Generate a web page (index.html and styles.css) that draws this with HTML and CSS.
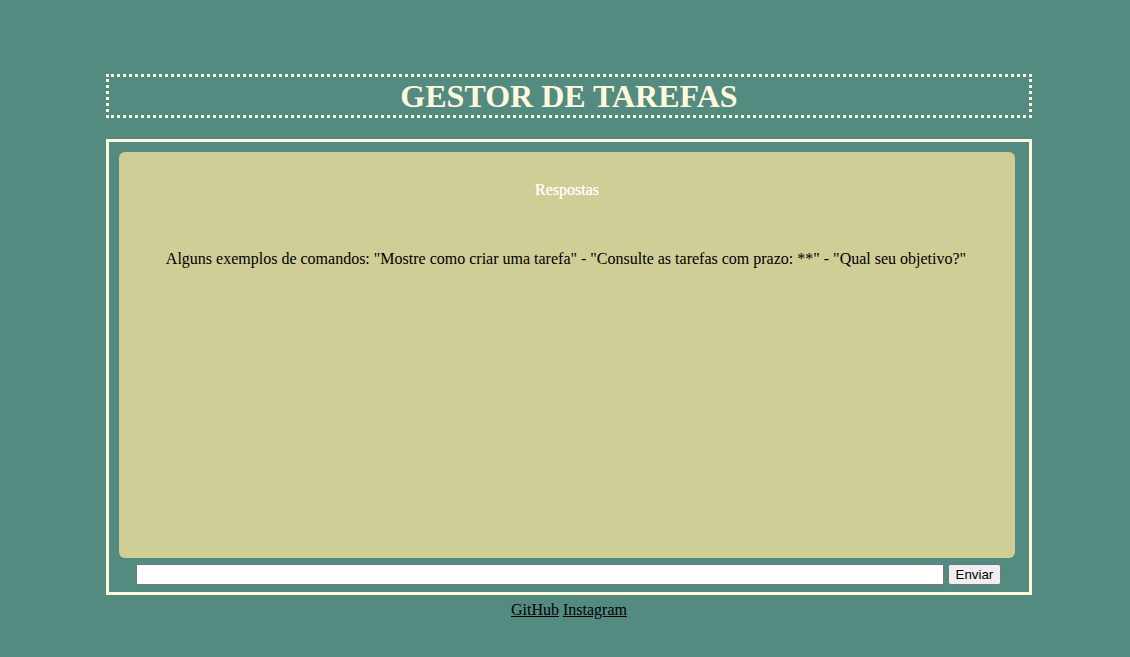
FILE: index.html
```html
<!DOCTYPE html>
<html lang="pt">
<head>
<meta charset="utf-8">
<title>Gestor de Tarefas</title>
<link rel="stylesheet" href="styles.css">
</head>
<body>
<div class="page">
  <header class="title-box">
    <h1 class="title">GESTOR DE TAREFAS</h1>
  </header>
  <main class="chat-box">
    <section class="answers">
      <h2 class="answers-title">Respostas</h2>
      <p class="examples">Alguns exemplos de comandos: "Mostre como criar uma tarefa" - "Consulte as tarefas com prazo: **" - "Qual seu objetivo?"</p>
    </section>
    <form class="ask-form">
      <input class="ask-input" type="text">
      <button class="ask-button" type="button">Enviar</button>
    </form>
  </main>
  <footer class="links">
    <a href="#">GitHub</a> <a href="#">Instagram</a>
  </footer>
</div>
</body>
</html>
```
FILE: styles.css
```css
html, body {
  margin: 0;
  padding: 0;
  background: #548b81;
}
body {
  font-family: "Liberation Serif", "Times New Roman", serif;
  font-size: 16px;
  color: #000;
}
.page {
  width: 926px;
  margin-left: 106px;
  padding-top: 74px;
}
.title-box {
  border: 3px dotted #fff8dc;
  height: 38px;
  display: flex;
  align-items: center;
  justify-content: center;
}
.title {
  margin: 0;
  font-size: 32px;
  font-weight: bold;
  color: #fff8dc;
  line-height: 38px;
}
.chat-box {
  margin-top: 21px;
  border: 3px solid #fff8dc;
  padding: 10px 14px 7px 10px;
}
.answers {
  background: #d0ce97;
  border-radius: 6px;
  height: 406px;
  padding-top: 28px;
  box-sizing: border-box;
  text-align: center;
}
.answers-title {
  margin: 0;
  font-size: 16px;
  font-weight: normal;
  color: #ffffff;
  line-height: 20px;
  text-shadow: 0 0 0.3px #ffffff;
}
.examples {
  margin: 49px 0 0 0;
  line-height: 20px;
  padding-right: 2px;
}
.ask-form {
  margin-top: 6px;
  display: flex;
  justify-content: center;
  align-items: center;
  gap: 4px;
  padding-left: 2px;
}
.ask-input {
  width: 808px;
  height: 21px;
  box-sizing: border-box;
  margin: 0;
}
.ask-button {
  width: 53px;
  height: 21px;
  box-sizing: border-box;
  margin: 0;
  font-family: "Liberation Sans", Arial, sans-serif;
  font-size: 13.333px;
  padding: 1px 6px;
}
.links {
  text-align: center;
  margin-top: 6px;
  line-height: 18px;
}
.links a {
  color: #000;
}
```
